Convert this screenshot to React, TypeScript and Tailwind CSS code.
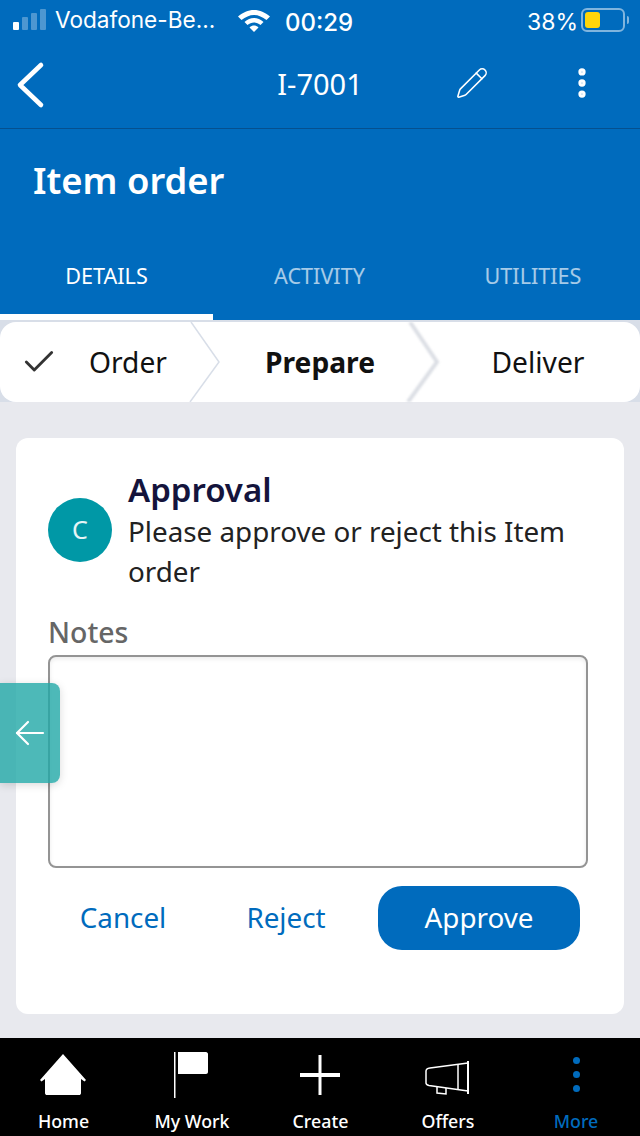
import { Pencil, EllipsisVertical, Check } from 'lucide-react';

const noto = { fontFamily: '"Noto Sans", "Open Sans", sans-serif' };

function StatusBar() {
  return (
    <div className="h-10 flex items-center relative text-white font-['Inter',sans-serif] shrink-0">
      <div className="flex items-end gap-[3px] ml-[13px] h-[21px] mb-[1px]">
        <div className="w-[6px] h-[8px] bg-white rounded-[1px]" />
        <div className="w-[6px] h-[13px] bg-white/30 rounded-[1px]" />
        <div className="w-[6px] h-[17px] bg-white/30 rounded-[1px]" />
        <div className="w-[6px] h-[21px] bg-white/30 rounded-[1px]" />
      </div>
      <span className="ml-[9px] text-[22.6px]">Vodafone-Be...</span>
      <svg className="absolute left-[238px] top-[10px]" width="32" height="22" viewBox="0 0 32 22" fill="white">
        <path d="M16 0C22 0 27 2.500 32 6.500L28.500 10C24.500 7 20.500 5 16 5C11.500 5 7.500 7 3.500 10L0 6.500C5 2.500 10 0 16 0Z" />
        <path d="M16 8C19.500 8 22.500 9.500 25.500 12L22.500 15C20.500 13.500 18.500 12.500 16 12.500C13.500 12.500 11.500 13.500 9.500 15L6.500 12C9.500 9.500 12.500 8 16 8Z" />
        <path d="M16 15.500C17.500 15.500 19 16 20.500 17.500L16 22L11.500 17.500C13 16 14.500 15.500 16 15.500Z" />
      </svg>
      <span className="absolute left-[285px] top-[5px] text-[24px] font-medium">00:29</span>
      <span className="absolute left-[527px] top-[5px] text-[23px]">38%</span>
      <div className="absolute left-[581px] top-[8px] w-[44px] h-[24px] rounded-[6px] border-2 border-white/50 p-[2px]">
        <div className="w-[15px] h-[16px] bg-[#ffd60a] rounded-[3px]" />
      </div>
      <div className="absolute left-[627px] top-[16px] w-[2px] h-[8px] bg-white/50 rounded-r" />
    </div>
  );
}

function Header() {
  return (
    <div className="h-[89px] flex items-center relative border-b border-[#05508f] shrink-0">
      <svg className="absolute left-[14px] top-[20px]" width="32" height="50" viewBox="0 0 32 50" fill="none">
        <path d="M27 5L6 25L27 45" stroke="white" strokeWidth="4.6" strokeLinecap="round" strokeLinejoin="round" />
      </svg>
      <div className="flex-1 text-center text-white text-[29px]" style={noto}>I-7001</div>
      <Pencil className="absolute left-[455px] top-[26px] text-white" size={34} strokeWidth={1.1} />
      <EllipsisVertical className="absolute left-[563px] top-[24px] text-white" size={38} strokeWidth={2.6} />
    </div>
  );
}

function Tabs() {
  return (
    <div className="flex h-20 text-[21.6px] shrink-0" style={noto}>
      <div className="w-[213px] flex items-start justify-center text-white border-b-[6px] border-white pt-[20px]">DETAILS</div>
      <div className="w-[213px] flex items-start justify-center text-white/65 pt-[20px]">ACTIVITY</div>
      <div className="w-[214px] flex items-start justify-center text-white/65 pt-[20px]">UTILITIES</div>
    </div>
  );
}

function Stepper() {
  return (
    <div className="bg-[#d8dee8] pt-[2px] shrink-0">
      <div className="relative h-20 bg-white rounded-2xl flex items-center text-[28.2px] text-[#111]" style={noto}>
        <svg className="absolute left-[186px] top-0" width="40" height="80" viewBox="0 0 40 80" fill="none">
          <path d="M5 0L33 40L4 80" stroke="#d8dee8" strokeWidth="1.500" />
        </svg>
        <svg className="absolute left-[400px] top-0 blur-[1px]" width="44" height="80" viewBox="0 0 44 80" fill="none">
          <path d="M10 0L37 40L8 80" stroke="#dcdfe5" strokeWidth="4" />
        </svg>
        <div className="w-[190px] flex items-center shrink-0">
          <Check className="ml-[20px] text-[#333]" size={38} strokeWidth={1.8} />
          <span className="ml-[31px]">Order</span>
        </div>
        <div className="w-[220px] text-center font-bold pl-[40px] shrink-0">Prepare</div>
        <div className="flex-1 text-center pl-[26px]">Deliver</div>
      </div>
    </div>
  );
}

function Card() {
  return (
    <div className="mx-4 mt-9 bg-white rounded-xl h-[576px] px-8 pt-[30px]" style={noto}>
      <div className="flex items-center gap-4">
        <div className="w-16 h-16 rounded-full bg-[#0098a6] flex items-center justify-center text-white/90 text-[25px] shrink-0">C</div>
        <div>
          <div className="text-[33px] font-semibold text-[#14143c] leading-[44px]">Approval</div>
          <div className="text-[27.8px] text-[#222] leading-[40px] mt-[-1px] w-[460px]">Please approve or reject this Item order</div>
        </div>
      </div>
      <div className="text-[28.4px] font-medium text-[#666] mt-[21px] leading-[40px]">Notes</div>
      <div className="w-[540px] h-[213px] mt-[3px] rounded-lg border-2 border-[#949494] shadow-[inset_0_2px_4px_rgba(0,0,0,0.08)]" />
      <div className="flex items-center mt-[18px] text-[27.8px] text-[#006bbd]">
        <div className="w-[150px] text-center">Cancel</div>
        <div className="w-[176px] text-center">Reject</div>
        <div className="w-[202px] h-16 ml-[4px] rounded-[24px] bg-[#006bbd] text-white flex items-center justify-center">Approve</div>
      </div>
    </div>
  );
}

function NavItem({ label, width, active, children }: { label: string; width: string; active?: boolean; children: React.ReactNode }) {
  return (
    <div className={`${width} flex flex-col items-center ${active ? 'text-[#006bbd]' : 'text-white'}`}>
      <div className="h-[72px] flex justify-center">{children}</div>
      <span className="leading-6 -mt-[1px]">{label}</span>
    </div>
  );
}

function BottomNav() {
  return (
    <div className="h-[98px] bg-black flex text-[17.8px] font-medium shrink-0" style={noto}>
      <NavItem label="Home" width="w-[127px]">
        <svg className="mt-[15px] -ml-[2px]" width="48" height="44" viewBox="0 0 48 44" fill="white">
          <path d="M24 1L47 27L45.500 28.500L42 26V40C42 41.500 41 42 40 42H8C7 42 6 41.500 6 40V26L2.500 28.500L1 27Z" />
        </svg>
      </NavItem>
      <NavItem label="My Work" width="w-[130px]">
        <svg className="mt-[14px]" width="48" height="46" viewBox="0 0 48 46" fill="white">
          <rect x="6" y="0" width="1.500" height="46" />
          <path d="M10 0H38C39 0 40 1 40 2V20C40 21 39 22 38 22H10Z" />
        </svg>
      </NavItem>
      <NavItem label="Create" width="w-[127px]">
        <svg className="mt-[17px] -ml-[1px]" width="40" height="40" viewBox="0 0 40 40" fill="white">
          <rect x="18.500" y="0" width="3" height="40" />
          <rect x="0" y="18" width="40" height="4" />
        </svg>
      </NavItem>
      <NavItem label="Offers" width="w-[128px]">
        <svg className="mt-[23px] -ml-[3px]" width="46" height="36" viewBox="0 0 46 36" fill="none" stroke="white" strokeWidth="1.500">
          <path d="M44 0V33" strokeWidth="2" />
          <path d="M44 2L6 7C3 7.500 2 8.500 2 10V22C2 23.500 3 24 5 24.500L44 30" />
          <path d="M34 3.500V28.500" />
          <path d="M13 26V32L22 33V27" />
        </svg>
      </NavItem>
      <NavItem label="More" width="w-[128px]" active>
        <div className="flex flex-col gap-[7px] mt-[19px]">
          <div className="w-[7px] h-[7px] rounded-full bg-[#006bbd]" />
          <div className="w-[7px] h-[7px] rounded-full bg-[#006bbd]" />
          <div className="w-[7px] h-[7px] rounded-full bg-[#006bbd]" />
        </div>
      </NavItem>
    </div>
  );
}

export default function App() {
  return (
    <div className="w-[640px] h-[1136px] bg-[#e8e9ee] flex flex-col relative overflow-hidden">
      <div className="bg-[#006bbd] shrink-0">
        <StatusBar />
        <Header />
        <div className="h-[111px] pl-[33px] pt-[27px] text-white text-[36.4px] font-semibold leading-[48px]" style={noto}>Item order</div>
        <Tabs />
      </div>
      <Stepper />
      <div className="flex-1">
        <Card />
      </div>
      <BottomNav />
      <div className="absolute left-0 top-[683px] w-[60px] h-[100px] rounded-r-lg bg-[#20a8a6]/80 shadow-[0_2px_8px_rgba(0,0,0,0.15)] flex items-center justify-end pr-[15px]">
        <svg width="30" height="26" viewBox="0 0 30 26" fill="none" stroke="white" strokeWidth="2.2" strokeLinecap="round" strokeLinejoin="round">
          <path d="M28 13H2" />
          <path d="M13 2L2 13L13 24" />
        </svg>
      </div>
    </div>
  );
}
